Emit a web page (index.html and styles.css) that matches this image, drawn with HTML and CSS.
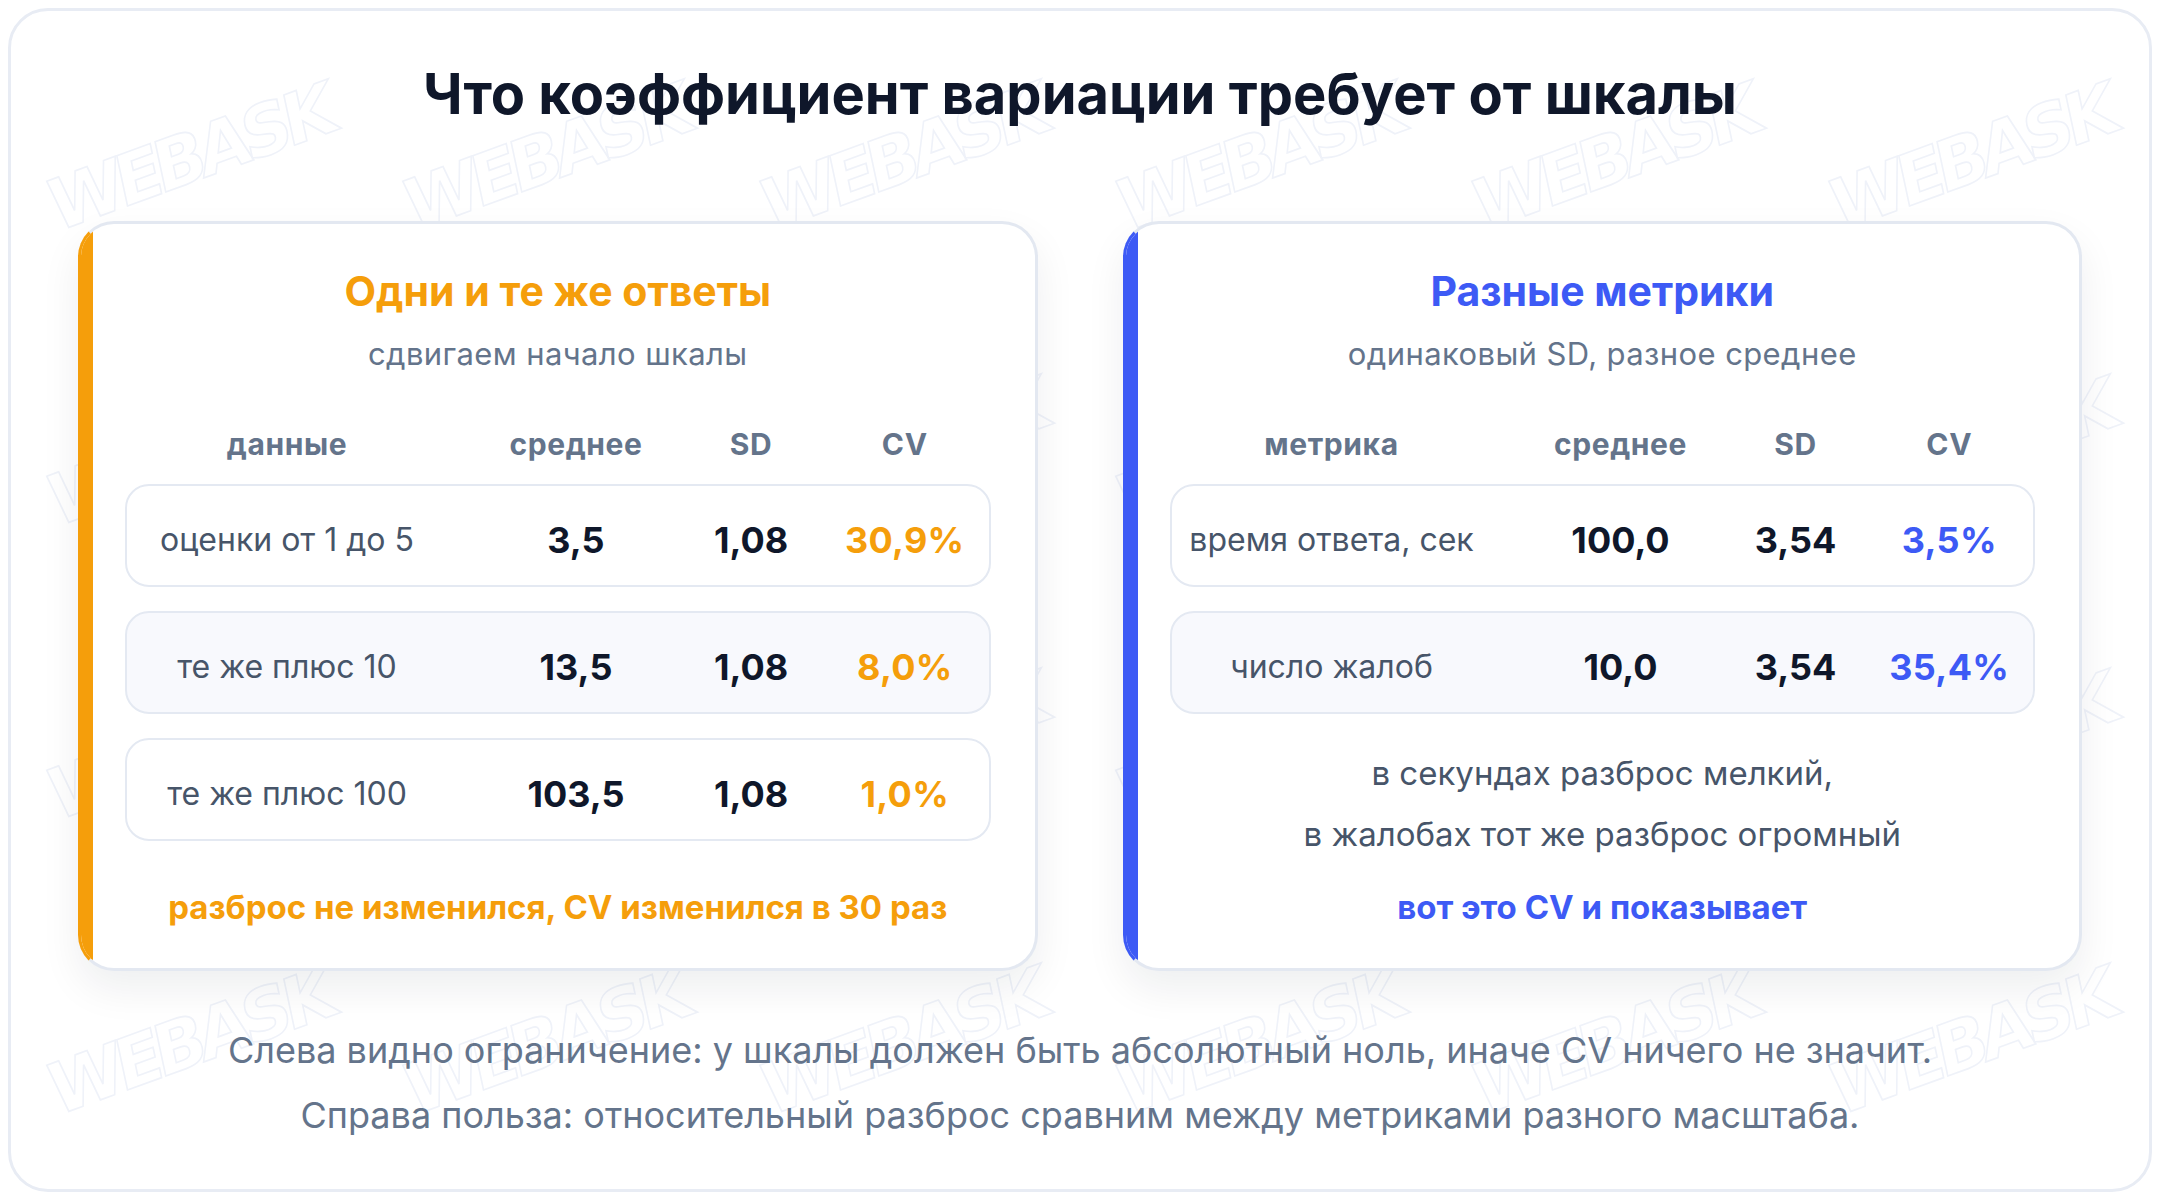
FILE: index.html
```html
<!DOCTYPE html>
<html lang="ru">
<head>
<meta charset="utf-8">
<title>Что коэффициент вариации требует от шкалы</title>
<link rel="stylesheet" href="styles.css">
</head>
<body>
<div class="frame">
  <div class="watermarks" aria-hidden="true">
    <span class="wm">WEBASK</span><span class="wm">WEBASK</span><span class="wm">WEBASK</span><span class="wm">WEBASK</span><span class="wm">WEBASK</span><span class="wm">WEBASK</span>
    <span class="wm">WEBASK</span><span class="wm">WEBASK</span><span class="wm">WEBASK</span><span class="wm">WEBASK</span><span class="wm">WEBASK</span><span class="wm">WEBASK</span>
    <span class="wm">WEBASK</span><span class="wm">WEBASK</span><span class="wm">WEBASK</span><span class="wm">WEBASK</span><span class="wm">WEBASK</span><span class="wm">WEBASK</span>
    <span class="wm">WEBASK</span><span class="wm">WEBASK</span><span class="wm">WEBASK</span><span class="wm">WEBASK</span><span class="wm">WEBASK</span><span class="wm">WEBASK</span>
  </div>

  <div class="content">
    <h1 class="title">Что коэффициент вариации требует от шкалы</h1>

    <div class="cards">
      <section class="card card-orange">
        <h2 class="card-title">Одни и те же ответы</h2>
        <p class="card-sub">сдвигаем начало шкалы</p>

        <div class="thead">
          <span>данные</span><span>среднее</span><span>SD</span><span>CV</span>
        </div>
        <div class="trow">
          <span class="label">оценки от 1 до 5</span><span class="num">3,5</span><span class="num">1,08</span><span class="cv">30,9%</span>
        </div>
        <div class="trow alt">
          <span class="label">те же плюс 10</span><span class="num">13,5</span><span class="num">1,08</span><span class="cv">8,0%</span>
        </div>
        <div class="trow">
          <span class="label">те же плюс 100</span><span class="num">103,5</span><span class="num">1,08</span><span class="cv">1,0%</span>
        </div>

        <p class="card-foot foot-left">разброс не изменился, CV изменился в 30 раз</p>
      </section>

      <section class="card card-blue">
        <h2 class="card-title">Разные метрики</h2>
        <p class="card-sub">одинаковый SD, разное среднее</p>

        <div class="thead">
          <span>метрика</span><span>среднее</span><span>SD</span><span>CV</span>
        </div>
        <div class="trow">
          <span class="label">время ответа, сек</span><span class="num">100,0</span><span class="num">3,54</span><span class="cv">3,5%</span>
        </div>
        <div class="trow alt">
          <span class="label">число жалоб</span><span class="num">10,0</span><span class="num">3,54</span><span class="cv">35,4%</span>
        </div>

        <p class="card-note">в секундах разброс мелкий,<br>в жалобах тот же разброс огромный</p>

        <p class="card-foot foot-right">вот это CV и показывает</p>
      </section>
    </div>

    <div class="summary">
      <p>Слева видно ограничение: у шкалы должен быть абсолютный ноль, иначе CV ничего не значит.</p>
      <p>Справа польза: относительный разброс сравним между метриками разного масштаба.</p>
    </div>
  </div>
</div>
</body>
</html>
```
FILE: styles.css
```css
* { box-sizing: border-box; }

html, body {
  margin: 0;
  padding: 0;
  background: #ffffff;
}

body {
  padding: 8px;
  font-family: Inter, "Noto Sans", "Liberation Sans", sans-serif;
  color: #0f172a;
}

.frame {
  position: relative;
  height: 1184px;
  border: 3px solid #e8ecf4;
  border-radius: 40px;
  background: #ffffff;
  overflow: hidden;
}

/* decorative watermark layer behind content */
.watermarks {
  position: absolute;
  inset: 0;
  display: grid;
  grid-template-columns: repeat(6, 1fr);
  grid-template-rows: repeat(4, 1fr);
  pointer-events: none;
  z-index: 0;
}

.wm {
  display: flex;
  align-items: center;
  justify-content: center;
  font-family: "DejaVu Sans", sans-serif;
  font-weight: 700;
  font-size: 70px;
  letter-spacing: -7px;
  color: transparent;
  -webkit-text-stroke: 1.6px #eff2f9;
  transform: rotate(-20deg) skewX(-8deg);
}

.content {
  position: relative;
  z-index: 1;
  padding: 49px 67px 0;
}

.title {
  margin: 0;
  text-align: center;
  font-size: 56px;
  line-height: 68px;
  font-weight: 700;
  color: #0f172a;
}

.cards {
  margin-top: 93px;
  display: grid;
  grid-template-columns: 1fr 1fr;
  column-gap: 85px;
}

.card {
  position: relative;
  display: flex;
  flex-direction: column;
  background: #ffffff;
  border: 3px solid #e3e8f1;
  border-radius: 36px;
  overflow: hidden;
  padding: 46px 44px 43px;
  box-shadow: 0 18px 40px rgba(15, 23, 42, 0.07);
}

.card::before {
  content: "";
  position: absolute;
  left: 0;
  top: 0;
  bottom: 0;
  width: 12px;
}

.card-orange { border-left-color: #f59e0b; }
.card-orange::before { background: #f59e0b; }
.card-blue { border-left-color: #3d5af5; }
.card-blue::before { background: #3d5af5; }

.card-title {
  margin: 0;
  text-align: center;
  font-size: 41px;
  line-height: 43px;
  font-weight: 700;
}

.card-orange .card-title { color: #f59e0b; }
.card-blue .card-title { color: #3d5af5; }

.card-sub {
  margin: 23px 0 0;
  text-align: center;
  font-size: 31px;
  line-height: 36px;
  letter-spacing: 0.4px;
  color: #64748b;
}

.thead,
.trow {
  display: grid;
  grid-template-columns: 320px 210px 92px 1fr;
  column-gap: 24px;
  align-items: center;
  text-align: center;
  white-space: nowrap;
}

.thead {
  margin: 55px 2px 0;
  font-size: 30px;
  line-height: 34px;
  font-weight: 700;
  letter-spacing: 0.6px;
  color: #64748b;
}

.trow {
  margin-top: 24px;
  height: 103px;
  padding-top: 8px;
  border: 2px solid #e4e9f2;
  border-radius: 24px;
  background: #ffffff;
}

.thead + .trow { margin-top: 23px; }

.trow.alt { background: #f8f9fd; }

.label {
  font-size: 32px;
  color: #475569;
}

.num {
  font-size: 36px;
  font-weight: 700;
  color: #0f172a;
}

.cv {
  font-size: 36px;
  font-weight: 700;
  letter-spacing: 0.3px;
}

.card-orange .cv { color: #f59e0b; }
.card-blue .cv { color: #3d5af5; }

.card-note {
  margin: 29px 0 0;
  text-align: center;
  font-size: 33px;
  line-height: 61px;
  color: #475569;
}

.card-foot {
  margin: 0;
  text-align: center;
  font-size: 33px;
  line-height: 36px;
  font-weight: 700;
}

.foot-left { margin-top: 48px; color: #f59e0b; }
.foot-right { margin-top: auto; color: #3d5af5; }

.summary {
  margin-top: 47px;
  text-align: center;
  font-size: 36px;
  line-height: 65px;
  color: #64748b;
}

.summary p { margin: 0; }
```
